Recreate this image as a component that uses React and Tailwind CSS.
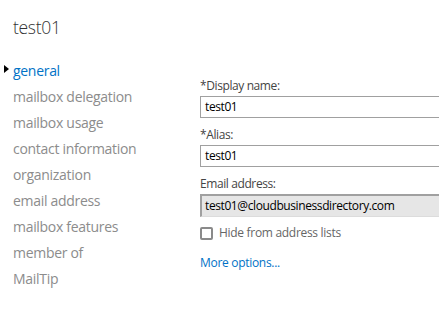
export default function App() {
  const navItems = [
    "mailbox delegation",
    "mailbox usage",
    "contact information",
    "organization",
    "email address",
    "mailbox features",
    "member of",
    "MailTip",
  ];

  return (
    <div
      className="w-[439px] h-[323px] overflow-hidden bg-white text-[#333]"
      style={{ fontFamily: "'Open Sans', 'Noto Sans', sans-serif" }}
    >
      {/* Title */}
      <div className="pl-[13px] pt-[14px] text-[17.5px] font-light tracking-[-0.3px] leading-[26px] text-[#333]">
        test01
      </div>

      <div className="flex mt-[17px]">
        {/* Left nav */}
        <nav className="w-[200px] shrink-0">
          <div className="relative pl-[13px] h-[26px] flex items-center text-[14px] tracking-[-0.3px] text-[#0072c6]">
            <span className="absolute left-[4px] top-[8px] w-0 h-0 border-y-[4px] border-y-transparent border-l-[5px] border-l-black" />
            general
          </div>
          {navItems.map((item) => (
            <div
              key={item}
              className="pl-[13px] h-[26px] flex items-center text-[14px] tracking-[-0.3px] text-[#8c8c8c]"
            >
              {item}
            </div>
          ))}
        </nav>

        {/* Form */}
        <div className="flex-1 pt-[21px] text-[12px] tracking-[-0.4px]">
          <div className="leading-[16px] text-[#444]">*Display name:</div>
          <div className="mt-[2px] h-[22px] border border-[#a0a0a0] bg-white pl-[4px] flex items-center text-black -mr-[10px]">
            test01
          </div>

          <div className="mt-[9px] leading-[16px] text-[#444]">*Alias:</div>
          <div className="mt-[2px] h-[22px] border border-[#a0a0a0] bg-white pl-[4px] flex items-center text-black -mr-[10px]">
            test01
          </div>

          <div className="mt-[9px] leading-[16px] text-[#444]">Email address:</div>
          <div className="mt-[2px] h-[23px] border-t-2 border-l-2 border-t-[#a0a0a0] border-l-[#a0a0a0] border-b border-b-[#dcdcdc] bg-[#e6e6e6] pl-[3px] flex items-center text-black -mr-[10px]">
            test01@cloudbusinessdirectory.com
          </div>

          <label className="mt-[8px] h-[16px] flex items-center gap-[6px] tracking-[-0.3px] text-[#666]">
            <span className="w-[13px] h-[13px] border-2 border-[#8a8a8a] rounded-[2px] bg-white" />
            Hide from address lists
          </label>

          <div className="mt-[14px] leading-[16px] tracking-[-0.3px] text-[#0072c6]">More options...</div>
        </div>
      </div>
    </div>
  );
}
